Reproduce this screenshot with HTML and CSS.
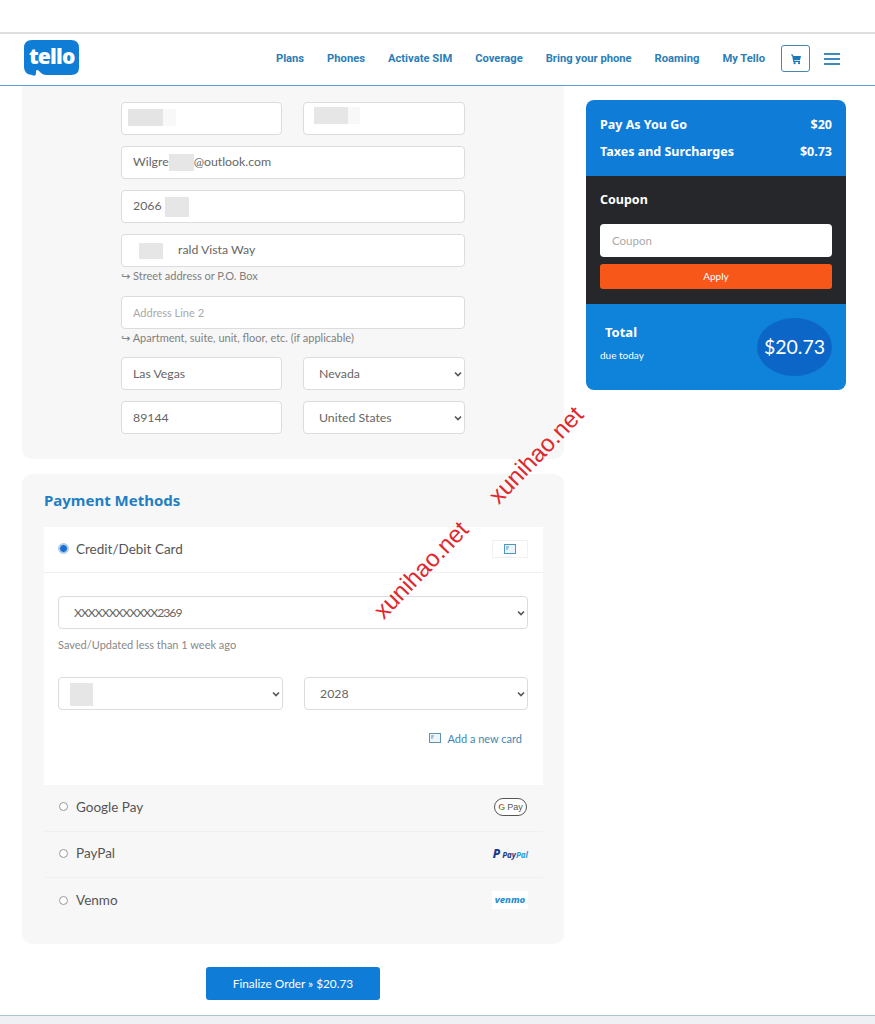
FILE: index.html
```html
<!DOCTYPE html>
<html lang="en">
<head>
    <meta charset="UTF-8">
    <meta name="viewport" content="width=device-width, initial-scale=1.0">
    <title>Tello - Checkout</title>
    <link rel="stylesheet" href="styles.css">
</head>
<body>
    <div class="topbar"></div>

    <header class="header">
        <a class="logo">
            <svg class="logo-shape" viewBox="0 0 55 37" width="55" height="37">
                <path d="M8 0H47Q55 0 55 8V28Q55 35 47 35H22Q19 35 17 33L15 31Q13 29 12 31L12 33Q12 37 8 35Q0 34 0 27V8Q0 0 8 0Z" fill="#0f7dd6"/>
            </svg>
            <span class="logo-text">tello</span>
        </a>
        <nav class="nav">
            <a>Plans</a>
            <a>Phones</a>
            <a>Activate SIM</a>
            <a>Coverage</a>
            <a>Bring your phone</a>
            <a>Roaming</a>
            <a>My Tello</a>
        </nav>
        <button class="cart-btn">
            <svg viewBox="0 0 12 12" width="12" height="12">
                <path d="M1 2H2.6L3.8 8.4H10" fill="none" stroke="#1a78b8" stroke-width="1.2"/>
                <path d="M3 3H11L10 7H3.6Z" fill="#1a78b8"/>
                <circle cx="4.6" cy="10.2" r="1.1" fill="#1a78b8"/>
                <circle cx="9" cy="10.2" r="1.1" fill="#1a78b8"/>
            </svg>
        </button>
        <div class="burger"><span></span><span></span><span></span></div>
    </header>

    <main class="checkout">
        <div class="left-col">
            <section class="panel address-panel">
                <div class="form">
                    <div class="row">
                        <div class="field"><span class="smudge smudge-name"></span></div>
                        <div class="field"><span class="smudge smudge-last"></span></div>
                    </div>
                    <div class="field">Wilgre<span class="smudge smudge-mail"></span>@outlook.com</div>
                    <div class="field">2066<span class="smudge smudge-phone"></span></div>
                    <div class="field"><span class="smudge smudge-street"></span>rald Vista Way</div>
                    <div class="hint"><span class="hint-arrow">↪</span> Street address or P.O. Box</div>
                    <input class="field" type="text" placeholder="Address Line 2">
                    <div class="hint hint-tight"><span class="hint-arrow">↪</span> Apartment, suite, unit, floor, etc. (if applicable)</div>
                    <div class="row">
                        <input class="field" type="text" value="Las Vegas">
                        <select class="field"><option>Nevada</option></select>
                    </div>
                    <div class="row">
                        <input class="field" type="text" value="89144">
                        <select class="field"><option>United States</option></select>
                    </div>
                </div>
            </section>

            <section class="panel payment-panel">
                <h2>Payment Methods</h2>
                <div class="card-box">
                    <div class="method method-active">
                        <span class="radio radio-on"></span>
                        <span class="method-name">Credit/Debit Card</span>
                        <span class="card-badge">
                            <svg viewBox="0 0 12 10" width="12" height="10">
                                <rect x="0.5" y="0.5" width="11" height="9" fill="#eaf4fa" stroke="#4a97c8"/>
                                <path d="M2 3H5M2 5H4" stroke="#4a97c8"/>
                            </svg>
                        </span>
                    </div>
                    <div class="card-body">
                        <select class="field field-mask"><option>XXXXXXXXXXXX2369</option></select>
                        <p class="saved">Saved/Updated less than 1 week ago</p>
                        <div class="row card-row">
                            <div class="select-wrap">
                                <select class="field"><option></option></select>
                                <span class="smudge smudge-month"></span>
                            </div>
                            <select class="field"><option>2028</option></select>
                        </div>
                        <a class="add-card">
                            <svg viewBox="0 0 12 10" width="12" height="10">
                                <rect x="0.5" y="0.5" width="11" height="9" fill="#eef4f8" stroke="#5f93b3"/>
                                <path d="M2 3H5M2 5H4" stroke="#5f93b3"/>
                            </svg>
                            Add a new card
                        </a>
                    </div>
                </div>
                <div class="method">
                    <span class="radio"></span>
                    <span class="method-name">Google Pay</span>
                    <span class="gpay"><b class="g">G</b>Pay</span>
                </div>
                <div class="method">
                    <span class="radio"></span>
                    <span class="method-name">PayPal</span>
                    <span class="paypal"><b class="pp">P</b><b class="pay">Pay</b><b class="pal">Pal</b></span>
                </div>
                <div class="method method-last">
                    <span class="radio"></span>
                    <span class="method-name">Venmo</span>
                    <span class="venmo">venmo</span>
                </div>
            </section>

            <div class="finalize"><button>Finalize Order » $20.73</button></div>
        </div>

        <aside class="summary">
            <div class="summary-lines">
                <div class="line"><span>Pay As You Go</span><span>$20</span></div>
                <div class="line"><span>Taxes and Surcharges</span><span>$0.73</span></div>
            </div>
            <div class="coupon">
                <h3>Coupon</h3>
                <input type="text" placeholder="Coupon">
                <button>Apply</button>
            </div>
            <div class="total">
                <div>
                    <div class="total-label">Total</div>
                    <div class="total-due">due today</div>
                </div>
                <div class="total-amount">$20.73</div>
            </div>
        </aside>
    </main>

    <footer class="footer"></footer>

    <div class="watermark wm-one">xunihao.net</div>
    <div class="watermark wm-two">xunihao.net</div>
</body>
</html>
```

FILE: styles.css
```css
* {
    box-sizing: border-box;
    margin: 0;
    padding: 0;
}

body {
    font-family: 'Lato', 'Open Sans', sans-serif;
    background: white;
    color: #555;
    height: 1024px;
    overflow: hidden;
    position: relative;
}

.topbar {
    height: 34px;
    border-bottom: 2px solid #dedede;
}

.header {
    height: 52px;
    display: flex;
    align-items: center;
    padding: 0 35px 2px 24px;
    border-bottom: 1px solid #5b9fd8;
}

.logo {
    position: relative;
    width: 55px;
    height: 37px;
    margin-top: -1px;
}

.logo-shape {
    display: block;
}

.logo-text {
    position: absolute;
    left: 5px;
    top: 1px;
    font-family: 'Open Sans', sans-serif;
    font-size: 21px;
    font-weight: 800;
    line-height: 30px;
    letter-spacing: -0.8px;
    color: white;
}

.nav {
    margin-left: auto;
    margin-top: -1px;
    display: flex;
    gap: 23px;
    font-family: 'Roboto', sans-serif;
    font-size: 11.2px;
    font-weight: 700;
    color: #2a7db8;
}

.cart-btn {
    width: 29px;
    height: 27px;
    margin-left: 16px;
    background: white;
    border: 1px solid #4a86ad;
    border-radius: 3px;
    display: flex;
    align-items: center;
    justify-content: center;
}

.burger {
    width: 16px;
    margin-left: 14px;
    display: flex;
    flex-direction: column;
    gap: 3px;
}

.burger span {
    height: 2px;
    background: #3d8cc0;
}

.checkout {
    display: grid;
    grid-template-columns: 542px 260px;
    gap: 22px;
    padding-left: 22px;
}

.panel {
    background: #f7f7f7;
}

.address-panel {
    height: 373px;
    padding: 16px 0 0 99px;
    border-radius: 0 0 10px 10px;
}

.form {
    width: 344px;
}

.row {
    display: grid;
    grid-template-columns: 161px 162px;
    gap: 21px;
}

.field {
    display: block;
    width: 100%;
    height: 33px;
    margin-bottom: 11px;
    padding: 0 11px;
    background: white;
    border: 1px solid #dcdcdc;
    border-radius: 4px;
    font-family: inherit;
    font-size: 12.3px;
    line-height: 30px;
    color: #666;
}

.field::placeholder {
    color: #aaa;
    font-size: 11px;
}

select.field {
    appearance: none;
    padding: 0 0 0 15px;
    background: white url("data:image/svg+xml,%3Csvg xmlns='http://www.w3.org/2000/svg' width='8' height='6'%3E%3Cpath d='M1 1.5L4 4.5L7 1.5' fill='none' stroke='%23555' stroke-width='1.6'/%3E%3C/svg%3E") no-repeat right 2px center;
}

.field-mask {
    letter-spacing: -1.05px;
}

.field + .hint {
    margin-top: -11px;
}

.hint {
    height: 29px;
    padding-top: 1px;
    font-size: 11px;
    line-height: 16px;
    color: #808080;
}

.hint-tight {
    height: 28px;
}

.hint-arrow {
    font-family: 'DejaVu Sans', sans-serif;
    font-size: 11px;
}

.smudge {
    display: inline-block;
    vertical-align: middle;
    background: #e6e6e6;
}

.smudge-name {
    width: 48px;
    height: 17px;
    margin: 0 0 2px -5px;
    background: linear-gradient(90deg, #e4e4e4 35px, #f8f8f8 35px);
}

.smudge-last {
    width: 46px;
    height: 17px;
    margin: -7px 0 0 -1px;
    background: linear-gradient(90deg, #e6e6e6 34px, #f8f8f8 34px);
}

.smudge-mail {
    width: 25px;
    height: 17px;
}

.smudge-phone {
    width: 24px;
    height: 20px;
    margin-left: 3px;
}

.smudge-street {
    width: 24px;
    height: 16px;
    margin: 0 15px 0 6px;
}

.payment-panel {
    height: 470px;
    margin-top: 15px;
    padding: 0 21px 0 22px;
    border-radius: 10px;
}

.payment-panel h2 {
    height: 53px;
    padding-top: 16px;
    font-family: 'Noto Sans', sans-serif;
    font-size: 15px;
    font-weight: 700;
    line-height: 20px;
    color: #1f7fc2;
}

.card-box {
    height: 258px;
    background: white;
}

.method {
    height: 46.5px;
    display: flex;
    align-items: center;
    padding: 0 15px 2px;
    border-bottom: 1px solid #f0f0f0;
}

.method-active {
    height: 46px;
}

.method-last {
    border-bottom: none;
}

.radio {
    width: 9px;
    height: 9px;
    border: 1px solid #999;
    border-radius: 50%;
    background: white;
}

.radio-on {
    background: #1a6fd0;
    border: 1px solid #a9c8ee;
    outline: 1px solid #a9c8ee;
}

.method-name {
    margin-left: 8px;
    font-size: 13.5px;
    color: #555;
}

.card-badge {
    margin-left: auto;
    width: 36px;
    height: 18px;
    border: 1px solid #f1f1f1;
    display: flex;
    align-items: center;
    justify-content: center;
}

.card-body {
    padding: 23px 15px 0 14px;
}

.card-body select.field {
    margin-bottom: 0;
}

.saved {
    height: 48px;
    padding-top: 8px;
    font-size: 11px;
    line-height: 16px;
    color: #888;
}

.card-row {
    grid-template-columns: 225px 224px;
    gap: 21px;
}

.select-wrap {
    position: relative;
}

.smudge-month {
    position: absolute;
    left: 12px;
    top: 6px;
    width: 23px;
    height: 23px;
}

.add-card {
    display: flex;
    justify-content: flex-end;
    align-items: center;
    gap: 6px;
    height: 16px;
    margin-top: 20px;
    padding-right: 6px;
    font-size: 11px;
    color: #3f86b5;
}

.gpay {
    margin-left: auto;
    margin-right: 1px;
    width: 33px;
    height: 18px;
    border: 1px solid #555;
    border-radius: 9px;
    background: white;
    font-family: 'Liberation Sans', sans-serif;
    font-size: 9px;
    line-height: 16px;
    text-align: center;
    color: #555;
}

.g {
    margin-right: 2px;
    background: linear-gradient(135deg, #d9503f 40%, #e8b23a 55%, #3fa35a 70%, #4285f4);
    -webkit-background-clip: text;
    -webkit-text-fill-color: transparent;
}

.paypal {
    margin-left: auto;
    font-family: 'Noto Sans', sans-serif;
    font-size: 8px;
    font-style: italic;
    white-space: nowrap;
}

.pp {
    font-size: 12px;
    font-weight: 800;
    color: #1a3b8a;
    margin-right: 2px;
}

.pay {
    color: #1f3d80;
}

.pal {
    color: #2d9bdc;
}

.venmo {
    margin-left: auto;
    width: 36px;
    height: 18px;
    background: white;
    font-family: 'Noto Sans', sans-serif;
    font-size: 9.5px;
    font-style: italic;
    font-weight: 800;
    line-height: 18px;
    text-align: center;
    color: #1f8fd0;
}

.finalize {
    display: flex;
    justify-content: center;
    margin-top: 23px;
}

.finalize button {
    width: 174px;
    height: 33px;
    background: #0f7dd8;
    color: white;
    border: none;
    border-radius: 3px;
    font-family: inherit;
    font-size: 11.8px;
}

.summary {
    align-self: start;
    margin-top: 14px;
    color: white;
    border-radius: 8px;
    overflow: hidden;
}

.summary-lines {
    height: 76px;
    padding: 11px 14px 0;
    background: #0f7dd8;
    font-family: 'Noto Sans', sans-serif;
    font-size: 12.5px;
    font-weight: 700;
}

.line {
    display: flex;
    justify-content: space-between;
    height: 27px;
    line-height: 27px;
}

.coupon {
    height: 128px;
    padding: 14px 14px 0;
    background: #25272b;
}

.coupon h3 {
    height: 34px;
    font-family: 'Noto Sans', sans-serif;
    font-size: 12.5px;
    font-weight: 700;
    line-height: 20px;
}

.coupon input {
    display: block;
    width: 100%;
    height: 33px;
    padding: 0 12px;
    border: none;
    border-radius: 4px;
    font-family: inherit;
    font-size: 11.5px;
}

.coupon input::placeholder {
    color: #aaa;
}

.coupon button {
    display: block;
    width: 100%;
    height: 25px;
    margin-top: 7px;
    padding-bottom: 2px;
    background: #f7581a;
    color: white;
    border: none;
    border-radius: 3px;
    font-family: inherit;
    font-size: 10px;
}

.total {
    height: 86px;
    padding: 14px 14px 0;
    background: #0f82da;
    display: flex;
    justify-content: space-between;
}

.total-label {
    padding: 5px 0 0 5px;
    font-family: 'Noto Sans', sans-serif;
    font-size: 13px;
    font-weight: 700;
    line-height: 18px;
}

.total-due {
    margin-top: 7px;
    font-size: 10px;
    line-height: 14px;
}

.total-amount {
    width: 75px;
    height: 58px;
    border-radius: 50%;
    background: #0b66c8;
    font-size: 19.5px;
    line-height: 58px;
    text-align: center;
}

.footer {
    margin-top: 15px;
    height: 9px;
    background: #eef0f3;
    border-top: 1px solid #a3c6cf;
}

.watermark {
    position: absolute;
    font-family: 'Liberation Sans', sans-serif;
    font-size: 24px;
    color: #e0282e;
    white-space: nowrap;
    transform: translate(-50%, -50%) rotate(-46deg);
}

.wm-one {
    left: 421px;
    top: 570px;
}

.wm-two {
    left: 536px;
    top: 455px;
}
```
